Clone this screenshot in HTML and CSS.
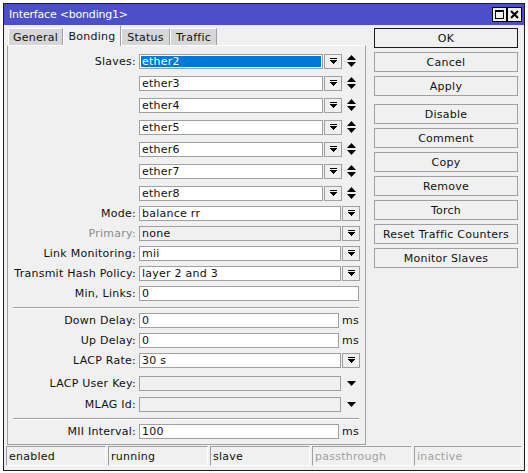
FILE: index.html
```html
<!DOCTYPE html>
<html>
<head>
<meta charset="utf-8">
<link rel="stylesheet" href="styles.css">
</head>
<body>
<div class="window">
  <div class="titlebar">
    <span class="title">Interface &lt;bonding1&gt;</span>
    <div class="tb-buttons">
      <span class="tb-btn"><svg width="9" height="9" viewBox="0 0 9 9"><path d="M0 0h9v9H0z M1 2v6h7V2z" fill="#000" fill-rule="evenodd"/></svg></span>
      <span class="tb-btn"><svg width="9" height="9" viewBox="0 0 9 9"><path d="M1 1L8 8M8 1L1 8" stroke="#000" stroke-width="2"/></svg></span>
    </div>
  </div>
  <div class="main">
    <div class="left">
      <div class="tabs">
        <span class="tab t-general">General</span>
        <span class="tab t-bonding active">Bonding</span>
        <span class="tab t-status">Status</span>
        <span class="tab t-traffic">Traffic</span>
      </div>
      <div class="panel">
        <div class="row">
          <span class="label">Slaves:</span>
          <span class="input w-slave"><span class="selected">ether2</span></span>
          <span class="ddbtn"><svg class="dd" width="7" height="7" viewBox="0 0 7 7"><path d="M0 0h7v1H0zM0 2h7v1H0zM1 3h5v1H1zM2 4h3v1H2zM3 5h1v1H3z"/></svg></span>
          <svg class="ud" width="9" height="13" viewBox="0 0 9 13"><path d="M4.5 0L9 5H0z M0 7H9L4.5 12z"/></svg>
        </div>
        <div class="row r-slave">
          <span class="label"></span>
          <span class="input w-slave">ether3</span>
          <span class="ddbtn"><svg class="dd" width="7" height="7" viewBox="0 0 7 7"><path d="M0 0h7v1H0zM0 2h7v1H0zM1 3h5v1H1zM2 4h3v1H2zM3 5h1v1H3z"/></svg></span>
          <svg class="ud" width="9" height="13" viewBox="0 0 9 13"><path d="M4.5 0L9 5H0z M0 7H9L4.5 12z"/></svg>
        </div>
        <div class="row r-slave">
          <span class="label"></span>
          <span class="input w-slave">ether4</span>
          <span class="ddbtn"><svg class="dd" width="7" height="7" viewBox="0 0 7 7"><path d="M0 0h7v1H0zM0 2h7v1H0zM1 3h5v1H1zM2 4h3v1H2zM3 5h1v1H3z"/></svg></span>
          <svg class="ud" width="9" height="13" viewBox="0 0 9 13"><path d="M4.5 0L9 5H0z M0 7H9L4.5 12z"/></svg>
        </div>
        <div class="row r-slave">
          <span class="label"></span>
          <span class="input w-slave">ether5</span>
          <span class="ddbtn"><svg class="dd" width="7" height="7" viewBox="0 0 7 7"><path d="M0 0h7v1H0zM0 2h7v1H0zM1 3h5v1H1zM2 4h3v1H2zM3 5h1v1H3z"/></svg></span>
          <svg class="ud" width="9" height="13" viewBox="0 0 9 13"><path d="M4.5 0L9 5H0z M0 7H9L4.5 12z"/></svg>
        </div>
        <div class="row r-slave">
          <span class="label"></span>
          <span class="input w-slave">ether6</span>
          <span class="ddbtn"><svg class="dd" width="7" height="7" viewBox="0 0 7 7"><path d="M0 0h7v1H0zM0 2h7v1H0zM1 3h5v1H1zM2 4h3v1H2zM3 5h1v1H3z"/></svg></span>
          <svg class="ud" width="9" height="13" viewBox="0 0 9 13"><path d="M4.5 0L9 5H0z M0 7H9L4.5 12z"/></svg>
        </div>
        <div class="row r-slave">
          <span class="label"></span>
          <span class="input w-slave">ether7</span>
          <span class="ddbtn"><svg class="dd" width="7" height="7" viewBox="0 0 7 7"><path d="M0 0h7v1H0zM0 2h7v1H0zM1 3h5v1H1zM2 4h3v1H2zM3 5h1v1H3z"/></svg></span>
          <svg class="ud" width="9" height="13" viewBox="0 0 9 13"><path d="M4.5 0L9 5H0z M0 7H9L4.5 12z"/></svg>
        </div>
        <div class="row r-slave">
          <span class="label"></span>
          <span class="input w-slave">ether8</span>
          <span class="ddbtn"><svg class="dd" width="7" height="7" viewBox="0 0 7 7"><path d="M0 0h7v1H0zM0 2h7v1H0zM1 3h5v1H1zM2 4h3v1H2zM3 5h1v1H3z"/></svg></span>
          <svg class="ud" width="9" height="13" viewBox="0 0 9 13"><path d="M4.5 0L9 5H0z M0 7H9L4.5 12z"/></svg>
        </div>

        <div class="row r-g5">
          <span class="label">Mode:</span>
          <span class="input w-combo">balance rr</span>
          <span class="ddbtn"><svg class="dd" width="7" height="7" viewBox="0 0 7 7"><path d="M0 0h7v1H0zM0 2h7v1H0zM1 3h5v1H1zM2 4h3v1H2zM3 5h1v1H3z"/></svg></span>
        </div>
        <div class="row r-g5">
          <span class="label disabled">Primary:</span>
          <span class="input w-combo off">none</span>
          <span class="ddbtn"><svg class="dd" width="7" height="7" viewBox="0 0 7 7"><path d="M0 0h7v1H0zM0 2h7v1H0zM1 3h5v1H1zM2 4h3v1H2zM3 5h1v1H3z"/></svg></span>
        </div>
        <div class="row r-g5">
          <span class="label">Link Monitoring:</span>
          <span class="input w-combo">mii</span>
          <span class="ddbtn"><svg class="dd" width="7" height="7" viewBox="0 0 7 7"><path d="M0 0h7v1H0zM0 2h7v1H0zM1 3h5v1H1zM2 4h3v1H2zM3 5h1v1H3z"/></svg></span>
        </div>
        <div class="row r-g5">
          <span class="label">Transmit Hash Policy:</span>
          <span class="input w-combo">layer 2 and 3</span>
          <span class="ddbtn"><svg class="dd" width="7" height="7" viewBox="0 0 7 7"><path d="M0 0h7v1H0zM0 2h7v1H0zM1 3h5v1H1zM2 4h3v1H2zM3 5h1v1H3z"/></svg></span>
        </div>
        <div class="row r-g5">
          <span class="label">Min, Links:</span>
          <span class="input w-full">0</span>
        </div>

        <div class="sep sep1"></div>

        <div class="row">
          <span class="label">Down Delay:</span>
          <span class="input w-ms">0</span>
          <span class="unit">ms</span>
        </div>
        <div class="row r-g5">
          <span class="label">Up Delay:</span>
          <span class="input w-ms">0</span>
          <span class="unit">ms</span>
        </div>
        <div class="row r-g5">
          <span class="label">LACP Rate:</span>
          <span class="input w-combo">30 s</span>
          <span class="ddbtn"><svg class="dd" width="7" height="7" viewBox="0 0 7 7"><path d="M0 0h7v1H0zM0 2h7v1H0zM1 3h5v1H1zM2 4h3v1H2zM3 5h1v1H3z"/></svg></span>
        </div>
        <div class="row r-g8">
          <span class="label">LACP User Key:</span>
          <span class="input w-combo off"></span>
          <svg class="down" width="9" height="5" viewBox="0 0 9 5"><path d="M0 0H9L4.5 5z"/></svg>
        </div>
        <div class="row r-g6">
          <span class="label">MLAG Id:</span>
          <span class="input w-combo off"></span>
          <svg class="down" width="9" height="5" viewBox="0 0 9 5"><path d="M0 0H9L4.5 5z"/></svg>
        </div>

        <div class="sep sep2"></div>

        <div class="row">
          <span class="label">MII Interval:</span>
          <span class="input w-ms">100</span>
          <span class="unit">ms</span>
        </div>
      </div>
    </div>
    <div class="actions">
      <span class="btn default">OK</span>
      <span class="btn">Cancel</span>
      <span class="btn">Apply</span>
      <span class="btn b-gap">Disable</span>
      <span class="btn">Comment</span>
      <span class="btn">Copy</span>
      <span class="btn">Remove</span>
      <span class="btn">Torch</span>
      <span class="btn">Reset Traffic Counters</span>
      <span class="btn">Monitor Slaves</span>
    </div>
  </div>
  <div class="statusbar">
    <span class="cell">enabled</span>
    <span class="cell">running</span>
    <span class="cell">slave</span>
    <span class="cell dim">passthrough</span>
    <span class="cell dim last">inactive</span>
  </div>
</div>
</body>
</html>
```
FILE: styles.css
```css
html, body {
  margin: 0;
  padding: 0;
}
body {
  background: #ffffff;
  font-family: "DejaVu Sans", sans-serif;
  font-size: 11px;
  letter-spacing: 0.25px;
  color: #111;
  width: 528px;
  height: 473px;
  overflow: hidden;
}
.window {
  margin: 3px 0 0 3px;
  width: 522px;
  height: 468px;
  box-sizing: border-box;
  border: 1px solid #1e1e1e;
  background: #f0f0f0;
  display: flex;
  flex-direction: column;
}
.titlebar {
  height: 21px;
  flex: none;
  background: #4b50c8;
  color: #fff;
  display: flex;
  align-items: center;
  padding-left: 5px;
}
.title {
  flex: 1;
  white-space: nowrap;
  letter-spacing: -0.2px;
}
.tb-buttons {
  display: flex;
  align-self: flex-start;
  margin-top: 3px;
  margin-right: 2px;
}
.tb-btn {
  width: 15px;
  height: 15px;
  box-sizing: border-box;
  border: 1px solid #000;
  background: #f0f0f0;
  display: flex;
  align-items: center;
  justify-content: center;
}
.main {
  display: flex;
  height: 421px;
  flex: none;
  padding-left: 3px;
}
.left {
  width: 359px;
  display: flex;
  flex-direction: column;
}
.tabs {
  height: 20px;
  display: flex;
  align-items: flex-end;
  padding-left: 1px;
  position: relative;
  z-index: 1;
}
.tab {
  height: 17px;
  box-sizing: border-box;
  background: #d6d6d6;
  border: 1px solid #a0a0a0;
  border-top-color: #ffffff;
  border-left-color: #ffffff;
  border-bottom: none;
  display: flex;
  align-items: center;
  justify-content: center;
  white-space: nowrap;
}
.tab.active {
  height: 21px;
  margin-bottom: -1px;
  background: #f0f0f0;
}
.t-general { width: 55px; }
.t-bonding { width: 58px; }
.t-status { width: 49px; }
.t-traffic { width: 47px; }
.panel {
  height: 400px;
  box-sizing: border-box;
  border: 1px solid #a0a0a0;
  border-top-color: #ffffff;
  padding-top: 8px;
  display: flex;
  flex-direction: column;
}
.row {
  display: flex;
  align-items: center;
  height: 15px;
  flex: none;
}
.r-slave { margin-top: 7px; }
.r-g5 { margin-top: 5px; }
.r-g6 { margin-top: 6px; }
.r-g8 { margin-top: 8px; }
.label {
  width: 128px;
  margin-right: 3px;
  text-align: right;
  white-space: nowrap;
  flex: none;
}
.label.disabled {
  color: #8c8c8c;
}
.input {
  height: 15px;
  box-sizing: border-box;
  border: 1px solid #a0a0a0;
  background: #ffffff;
  padding-left: 2px;
  display: flex;
  align-items: center;
  white-space: nowrap;
  flex: none;
}
.input.off {
  background: #f0f0f0;
}
.selected {
  background: #0078d7;
  color: #fff;
  align-self: stretch;
  flex: 1;
  margin: 1px 1px 1px -1px;
  padding-left: 1px;
  display: flex;
  align-items: center;
}
.w-slave { width: 184px; }
.w-combo { width: 202px; }
.w-full { width: 220px; }
.w-ms { width: 200px; }
.ddbtn {
  width: 18px;
  height: 15px;
  margin-left: 1px;
  box-sizing: border-box;
  border: 1px solid #a0a0a0;
  background: #f0f0f0;
  display: flex;
  align-items: center;
  justify-content: center;
  flex: none;
}
.dd { display: block; }
.ud {
  margin-left: 5px;
  display: block;
}
.down {
  margin-left: 6px;
  display: block;
}
.unit {
  margin-left: 3px;
}
.sep {
  width: 346px;
  margin-left: 5px;
  border-top: 1px solid #a0a0a0;
  border-bottom: 1px solid #ffffff;
  flex: none;
}
.sep1 { margin-top: 6px; margin-bottom: 4px; }
.sep2 { margin-top: 6px; margin-bottom: 4px; }
.actions {
  width: 144px;
  margin-left: 8px;
  padding-top: 3px;
  display: flex;
  flex-direction: column;
  gap: 4px;
}
.btn {
  height: 20px;
  box-sizing: border-box;
  border: 1px solid #a0a0a0;
  background: #f0f0f0;
  display: flex;
  align-items: center;
  justify-content: center;
  white-space: nowrap;
  flex: none;
}
.btn.default {
  border-color: #1a1a1a;
}
.b-gap { margin-top: 4px; }
.statusbar {
  display: flex;
  gap: 2px;
  padding-left: 2px;
  height: 20px;
  flex: none;
}
.cell {
  width: 100px;
  height: 20px;
  box-sizing: border-box;
  border-top: 1px solid #a0a0a0;
  border-left: 1px solid #a0a0a0;
  border-right: 1px solid #ffffff;
  border-bottom: 1px solid #ffffff;
  padding-left: 2px;
  display: flex;
  align-items: center;
  white-space: nowrap;
}
.cell.dim { color: #a0a0a0; }
.cell.last { width: 108px; }
```
